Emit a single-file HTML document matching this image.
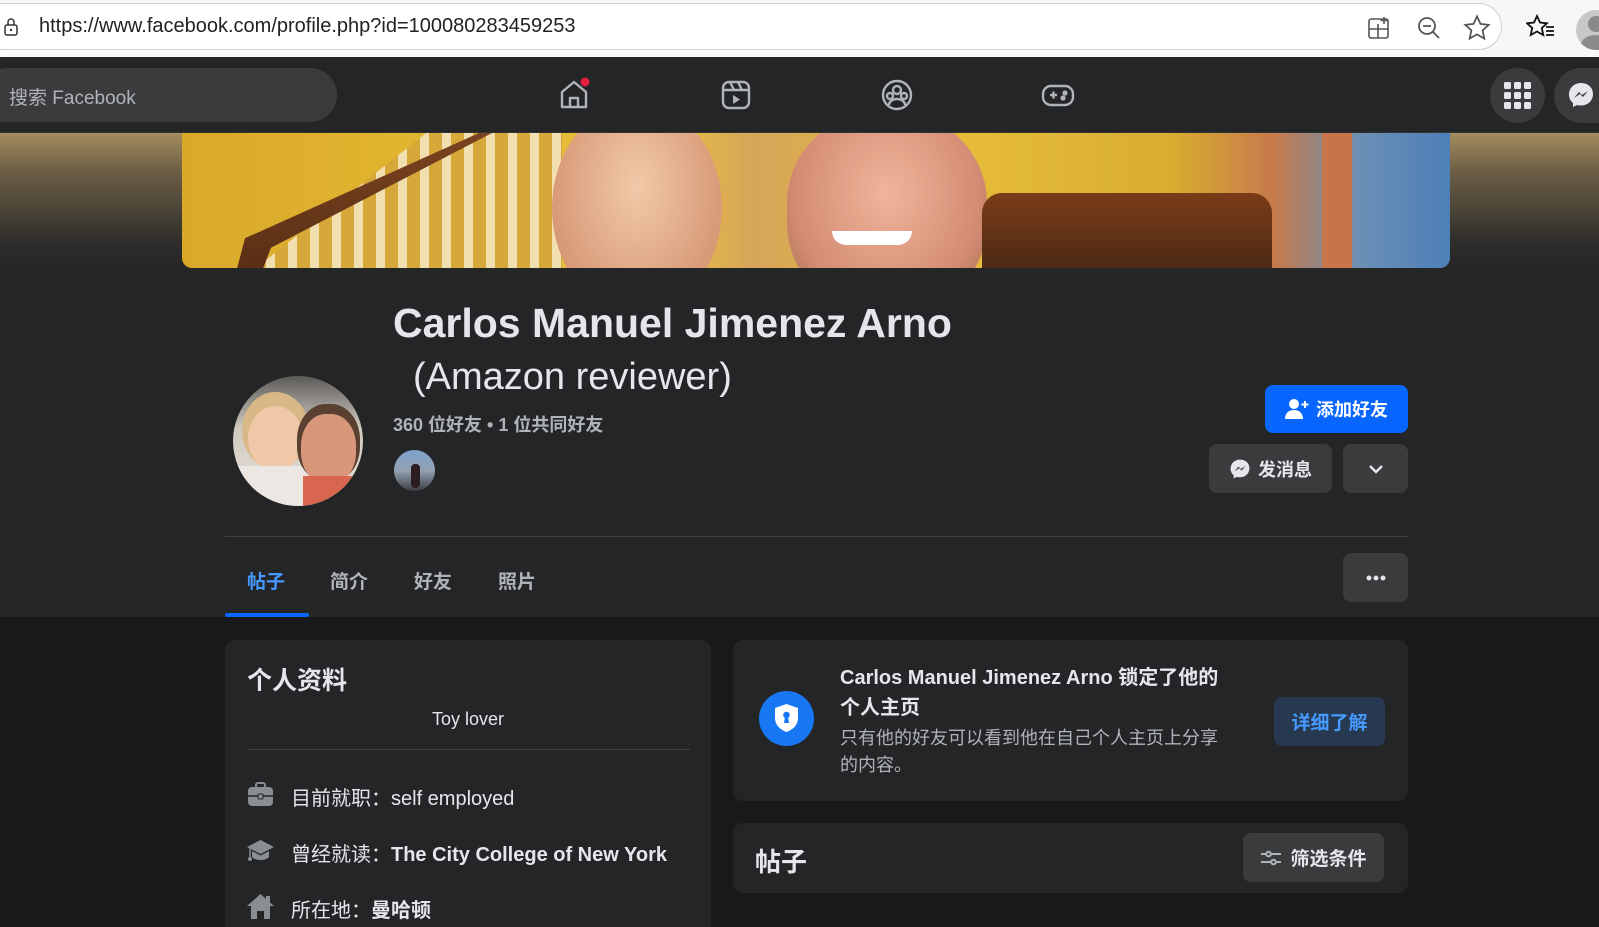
<!DOCTYPE html>
<html style="width:1599px;height:927px;overflow:hidden"><head><meta charset="utf-8"><style>
*{margin:0;padding:0;box-sizing:border-box}
body{width:1599px;height:927px;overflow:hidden;background:#18191a;font-family:"Liberation Sans","Noto Sans CJK SC",sans-serif;color:#e4e6eb;position:relative}
.abs{position:absolute}
.btn{position:absolute;border-radius:8px;display:flex;align-items:center;justify-content:center;font-weight:bold;font-size:18px}
</style></head><body>
<div class="abs" style="left:0;top:0;width:1599px;height:57px;background:#f7f7f7"></div>
<div class="abs" style="left:-20px;top:3px;width:1522px;height:47px;background:#fff;border:1px solid #d0d0d0;border-radius:24px"></div>
<svg class="abs" style="left:3px;top:17px" width="16" height="20" viewBox="0 0 16 20"><rect x="2" y="8" width="12" height="10" rx="2" fill="none" stroke="#333" stroke-width="1.5"/><path d="M5 8V5a3 3 0 0 1 6 0v3" fill="none" stroke="#333" stroke-width="1.5"/><circle cx="8" cy="13" r="1.2" fill="#333"/></svg>
<div class="abs" style="left:39px;top:15px;font-size:20px;color:#222">https://www.facebook.com/profile.php?id=100080283459253</div>
<svg class="abs" style="left:1367px;top:16px" width="24" height="24" viewBox="0 0 24 24" fill="none" stroke="#555" stroke-width="1.6"><rect x="2" y="3" width="19" height="19" rx="2"/><path d="M2 13h19M11 8v14M17 1v7M13.5 4.5h7"/></svg>
<svg class="abs" style="left:1416px;top:15px" width="26" height="26" viewBox="0 0 26 26" fill="none" stroke="#555" stroke-width="1.8"><circle cx="11" cy="11" r="8"/><path d="M7 11h8M17 17l6 6"/></svg>
<svg class="abs" style="left:1463px;top:14px" width="28" height="28" viewBox="0 0 24 24" fill="none" stroke="#555" stroke-width="1.5"><path d="M12 2l3 6.5 7 .8-5.2 4.8 1.5 7L12 17.5 5.7 21l1.5-7L2 9.3l7-.8z"/></svg>
<svg class="abs" style="left:1526px;top:14px" width="30" height="28" viewBox="0 0 30 28" fill="none" stroke="#111" stroke-width="1.8"><path d="M11 2l3 6.5 7 .8-5.2 4.8 1.5 7L11 17.5 4.7 21l1.5-7L1 9.3l7-.8z"/><path d="M20 13h8M20 17h8M20 21h8"/></svg>
<div class="abs" style="left:1576px;top:10px;width:23px;height:40px;border-radius:20px 0 0 20px;background:#c8c8c8;overflow:hidden"><div class="abs" style="left:12px;top:6px;width:16px;height:16px;border-radius:50%;background:#8a8a8a"></div><div class="abs" style="left:5px;top:25px;width:30px;height:20px;border-radius:50%;background:#8a8a8a"></div></div>
<div class="abs" style="left:0;top:57px;width:1599px;height:76px;background:#242526;border-bottom:1px solid #333"></div>
<div class="abs" style="left:-20px;top:68px;width:357px;height:54px;background:#3a3b3c;border-radius:27px"></div>
<div class="abs" style="left:9px;top:83px;font-size:19px;color:#b0b3b8">搜索 Facebook</div>
<svg class="abs" style="left:558px;top:77px" width="34" height="34" viewBox="0 0 34 34" fill="none" stroke="#b0b3b8" stroke-width="2.4" stroke-linejoin="round"><path d="M4 15L16 5l12 10v15H4z"/><path d="M12 30v-9h8v9"/><circle cx="27" cy="5" r="4.5" fill="#e41e3f" stroke="none"/></svg>
<svg class="abs" style="left:720px;top:79px" width="32" height="32" viewBox="0 0 32 32" fill="none" stroke="#b0b3b8" stroke-width="2.4"><rect x="3" y="3" width="26" height="26" rx="6"/><path d="M3 11h26M10 3l4 8M18 3l4 8"/><path d="M13 16v9l7-4.5z" fill="#b0b3b8" stroke="none"/></svg>
<svg class="abs" style="left:881px;top:79px" width="32" height="32" viewBox="0 0 32 32" fill="none" stroke="#b0b3b8" stroke-width="2.4"><circle cx="16" cy="16" r="14"/><circle cx="16" cy="11" r="4"/><circle cx="9" cy="17" r="3"/><circle cx="23" cy="17" r="3"/><path d="M8 26a8 6 0 0 1 16 0"/></svg>
<svg class="abs" style="left:1041px;top:81px" width="34" height="28" viewBox="0 0 34 28" fill="none" stroke="#b0b3b8" stroke-width="2.4"><rect x="2" y="5" width="30" height="19" rx="8"/><path d="M9 14h7M12.5 10.5v7"/><circle cx="24" cy="12" r="1.4" fill="#b0b3b8"/><circle cx="22" cy="17" r="1.4" fill="#b0b3b8"/></svg>
<div class="abs" style="left:1490px;top:68px;width:55px;height:55px;border-radius:50%;background:#3a3b3c"></div>
<svg class="abs" style="left:1504px;top:82px" width="27" height="27" viewBox="0 0 27 27" fill="#e4e6eb"><rect x="0" y="0" width="7" height="7" rx="1.5"/><rect x="10" y="0" width="7" height="7" rx="1.5"/><rect x="20" y="0" width="7" height="7" rx="1.5"/><rect x="0" y="10" width="7" height="7" rx="1.5"/><rect x="10" y="10" width="7" height="7" rx="1.5"/><rect x="20" y="10" width="7" height="7" rx="1.5"/><rect x="0" y="20" width="7" height="7" rx="1.5"/><rect x="10" y="20" width="7" height="7" rx="1.5"/><rect x="20" y="20" width="7" height="7" rx="1.5"/></svg>
<div class="abs" style="left:1554px;top:68px;width:45px;height:55px;border-radius:28px 0 0 28px;background:#3a3b3c"></div>
<svg class="abs" style="left:1567px;top:81px" width="28" height="28" viewBox="0 0 28 28"><path d="M14 2C7 2 2 7 2 13.5c0 3.5 1.5 6.5 4 8.5v4l4-2c1.2.4 2.6.5 4 .5 7 0 12-5 12-11.5S21 2 14 2z" fill="#e4e6eb"/><path d="M7 17l5-6 3 3 6-4-5 6-3-3z" fill="#3a3b3c"/></svg>
<div class="abs" style="left:0;top:133px;width:1599px;height:484px;background:linear-gradient(#a48c5e 0px,#6b5d44 40px,#2e2d2b 110px,#242526 140px,#242526 484px)"></div>
<div class="abs" style="left:182px;top:133px;width:1268px;height:135px;border-radius:0 0 10px 10px;overflow:hidden;background:linear-gradient(90deg,#d9a92a 0%,#e2b630 20%,#e8c040 38%,#d7a55a 45%,#e6bc3a 62%,#d8ad30 78%,#c77a4a 86%,#6b8fb6 93%,#4d7fb8 100%)">
 <div class="abs" style="left:40px;top:0;width:340px;height:135px;background:repeating-linear-gradient(90deg,#f1dfb0 0 9px,#d6a83a 9px 22px);clip-path:polygon(60% 0,100% 0,100% 100%,10% 100%)"></div>
 <div class="abs" style="left:50px;top:0;width:260px;height:135px;background:linear-gradient(#7b4320,#5a2f15);clip-path:polygon(95% 0,100% 0,15% 85%,12% 100%,2% 100%,5% 78%)"></div>
 <div class="abs" style="left:370px;top:-30px;width:170px;height:210px;border-radius:50%;background:radial-gradient(ellipse at 50% 40%,#f1c9a8,#d89a78 70%,#c88a58)"></div>
 <div class="abs" style="left:605px;top:-20px;width:200px;height:200px;border-radius:45%;background:radial-gradient(ellipse at 50% 40%,#efb59a,#d48c74 65%,#9a6a48)"></div>
 <div class="abs" style="left:650px;top:98px;width:80px;height:14px;border-radius:0 0 40px 40px;background:#fff"></div>
 <div class="abs" style="left:800px;top:60px;width:290px;height:75px;background:linear-gradient(#7a3c18,#4e2a14);border-radius:20px 20px 0 0"></div>
 <div class="abs" style="left:1140px;top:0;width:30px;height:135px;background:#c7744a"></div>
</div>
<div class="abs" style="left:230px;top:373px;width:136px;height:136px;border-radius:50%;background:#242526;padding:3px"><div style="width:130px;height:130px;border-radius:50%;overflow:hidden;background:linear-gradient(#5c5a58,#cfc9c0 40%,#e9e3da);position:relative">
 <div class="abs" style="left:15px;top:30px;width:55px;height:65px;border-radius:50%;background:#f0c8a8;box-shadow:0 -8px 0 6px #d8b887"></div>
 <div class="abs" style="left:0;top:90px;width:80px;height:50px;background:#ece7e3"></div>
 <div class="abs" style="left:68px;top:38px;width:55px;height:70px;border-radius:45%;background:#d8977a;box-shadow:0 -6px 0 4px #5a4030"></div>
 <div class="abs" style="left:70px;top:100px;width:70px;height:40px;background:#d9664e"></div>
</div></div>
<div class="abs" style="left:393px;top:300px;font-size:41px;font-weight:bold;color:#e4e6eb">Carlos Manuel Jimenez Arno</div>
<div class="abs" style="left:413px;top:356px;font-size:38px;color:#e4e6eb">(Amazon reviewer)</div>
<div class="abs" style="left:393px;top:411px;font-size:18px;font-weight:bold;color:#b0b3b8">360 位好友 • 1 位共同好友</div>
<div class="abs" style="left:393px;top:449px;width:43px;height:43px;border-radius:50%;background:linear-gradient(#7ea3cc,#93a1b2 50%,#3d3e44);border:1px solid #242526"><div class="abs" style="left:17px;top:14px;width:9px;height:24px;background:#2a1e22;border-radius:4px"></div></div>
<div class="btn" style="left:1265px;top:385px;width:143px;height:48px;background:#0866ff;color:#fff"><svg width="24" height="22" viewBox="0 0 24 22" style="margin-right:7px"><circle cx="9" cy="6" r="5" fill="#fff"/><path d="M0 21c0-6 4-9 9-9s9 3 9 9z" fill="#fff"/><path d="M20 3v7M16.5 6.5h7" stroke="#fff" stroke-width="2"/></svg>添加好友</div>
<div class="btn" style="left:1209px;top:444px;width:123px;height:49px;background:#3a3b3c;color:#e4e6eb"><svg width="22" height="22" viewBox="0 0 28 28" style="margin-right:7px"><path d="M14 2C7 2 2 7 2 13.5c0 3.5 1.5 6.5 4 8.5v4l4-2c1.2.4 2.6.5 4 .5 7 0 12-5 12-11.5S21 2 14 2z" fill="#e4e6eb"/><path d="M7 17l5-6 3 3 6-4-5 6-3-3z" fill="#3a3b3c"/></svg>发消息</div>
<div class="btn" style="left:1343px;top:444px;width:65px;height:49px;background:#3a3b3c"><svg width="16" height="10" viewBox="0 0 16 10"><path d="M2 2l6 6 6-6" fill="none" stroke="#e4e6eb" stroke-width="2.5"/></svg></div>
<div class="abs" style="left:225px;top:536px;width:1183px;height:1px;background:#3e4042"></div>
<div class="abs" style="left:247px;top:567px;font-size:19px;font-weight:bold;color:#4599ff">帖子</div>
<div class="abs" style="left:330px;top:567px;font-size:19px;font-weight:bold;color:#b0b3b8">简介</div>
<div class="abs" style="left:414px;top:567px;font-size:19px;font-weight:bold;color:#b0b3b8">好友</div>
<div class="abs" style="left:498px;top:567px;font-size:19px;font-weight:bold;color:#b0b3b8">照片</div>
<div class="abs" style="left:225px;top:613px;width:84px;height:4px;background:#0866ff;border-radius:2px"></div>
<div class="btn" style="left:1343px;top:553px;width:65px;height:49px;background:#3a3b3c"><svg width="20" height="6"><circle cx="3" cy="3" r="2.5" fill="#e4e6eb"/><circle cx="10" cy="3" r="2.5" fill="#e4e6eb"/><circle cx="17" cy="3" r="2.5" fill="#e4e6eb"/></svg></div>
<div class="abs" style="left:225px;top:640px;width:486px;height:287px;background:#242526;border-radius:10px 10px 0 0"></div>
<div class="abs" style="left:247px;top:661px;font-size:25px;font-weight:bold">个人资料</div>
<div class="abs" style="left:225px;top:709px;width:486px;text-align:center;font-size:18px">Toy lover</div>
<div class="abs" style="left:247px;top:749px;width:443px;height:1px;background:#3e4042"></div>
<svg class="abs" style="left:247px;top:781px" width="27" height="27" viewBox="0 0 27 27"><rect x="9" y="2" width="9" height="5" rx="2" fill="none" stroke="#8a8d91" stroke-width="2"/><rect x="1" y="6" width="25" height="19" rx="4" fill="#8a8d91"/><path d="M1 15h25" stroke="#242526" stroke-width="1.5"/><rect x="11" y="13" width="5" height="5" rx="1" fill="#8a8d91" stroke="#242526"/></svg>
<div class="abs" style="left:291px;top:782px;font-size:20px;color:#e4e6eb">目前就职：self employed</div>
<svg class="abs" style="left:247px;top:838px" width="27" height="27" viewBox="0 0 27 27" fill="#8a8d91"><path d="M13.5 2L27 9l-13.5 7L0 9z"/><path d="M5 13v6c3 4 14 4 17 0v-6l-8.5 4.5z"/><path d="M3 10v9" stroke="#8a8d91" stroke-width="1.5"/><circle cx="3" cy="21" r="2"/></svg>
<div class="abs" style="left:291px;top:838px;font-size:20px;color:#e4e6eb">曾经就读：<b>The City College of New York</b></div>
<svg class="abs" style="left:247px;top:893px" width="27" height="27" viewBox="0 0 27 27" fill="#8a8d91"><path d="M13.5 1L27 13h-4v13h-6v-8h-7v8H4V13H0z"/><rect x="19" y="3" width="4" height="7"/></svg>
<div class="abs" style="left:291px;top:894px;font-size:20px;color:#e4e6eb">所在地：<b>曼哈顿</b></div>
<div class="abs" style="left:733px;top:640px;width:675px;height:161px;background:#242526;border-radius:10px"></div>
<div class="abs" style="left:759px;top:691px;width:55px;height:55px;border-radius:50%;background:#1877f2"></div>
<svg class="abs" style="left:774px;top:703px" width="25" height="30" viewBox="0 0 25 30"><path d="M12.5 1L24 5v10c0 7-5 11.5-11.5 14C6 26.5 1 22 1 15V5z" fill="#fff"/><circle cx="12.5" cy="12" r="3.3" fill="#1877f2"/><path d="M11 14h3l1 6h-5z" fill="#1877f2"/></svg>
<div class="abs" style="left:840px;top:663px;font-size:20px;font-weight:bold;line-height:30px;width:430px">Carlos Manuel Jimenez Arno 锁定了他的<br>个人主页</div>
<div class="abs" style="left:840px;top:725px;font-size:18px;color:#b0b3b8;line-height:27px;width:430px">只有他的好友可以看到他在自己个人主页上分享<br>的内容。</div>
<div class="btn" style="left:1274px;top:697px;width:111px;height:49px;background:#263951;color:#4599ff;font-size:19px">详细了解</div>
<div class="abs" style="left:733px;top:823px;width:675px;height:70px;background:#242526;border-radius:10px"></div>
<div class="abs" style="left:755px;top:842px;font-size:26px;font-weight:bold">帖子</div>
<div class="btn" style="left:1243px;top:833px;width:141px;height:49px;background:#3a3b3c;color:#e4e6eb;font-size:19px"><svg width="22" height="18" viewBox="0 0 22 18" style="margin-right:8px" fill="none" stroke="#b0b3b8" stroke-width="2"><path d="M1 5h5M11 5h10M1 13h10M16 13h5"/><circle cx="8.5" cy="5" r="2.3"/><circle cx="13.5" cy="13" r="2.3"/></svg>筛选条件</div>
</body></html>
